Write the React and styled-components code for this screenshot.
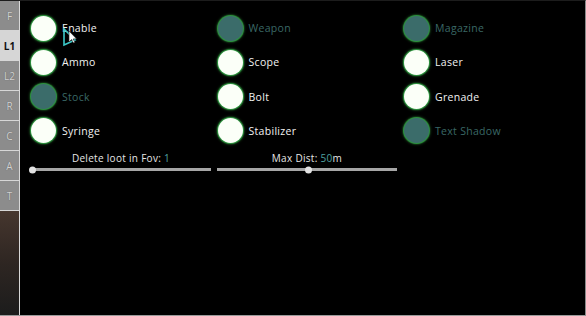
import React from 'react';
import styled, { createGlobalStyle } from 'styled-components';

const GlobalStyle = createGlobalStyle`
  html, body {
    margin: 0;
    padding: 0;
    background: #000;
    overflow: hidden;
  }
`;

const tabs = ['F', 'L1', 'L2', 'R', 'C', 'A', 'T'];

const toggles = [
  [{ label: 'Enable', on: true }, { label: 'Weapon', on: false }, { label: 'Magazine', on: false }],
  [{ label: 'Ammo', on: true }, { label: 'Scope', on: true }, { label: 'Laser', on: true }],
  [{ label: 'Stock', on: false }, { label: 'Bolt', on: true }, { label: 'Grenade', on: true }],
  [{ label: 'Syringe', on: true }, { label: 'Stabilizer', on: true }, { label: 'Text Shadow', on: false }],
];

const sliders = [
  { label: 'Delete loot in Fov: ', value: '1', unit: '', pos: 0 },
  { label: 'Max Dist: ', value: '50', unit: 'm', pos: 50 },
];

const App = () => {
  return (
    <>
      <GlobalStyle />
      <Window>
        <Sidebar>
          {tabs.map((t) => (
            <Tab key={t} active={t === 'L1'}>{t}</Tab>
          ))}
          <SideFill />
        </Sidebar>
        <Main>
          <Grid>
            {toggles.flat().map((item) => (
              <Toggle key={item.label}>
                <Dot on={item.on} />
                <Label on={item.on}>{item.label}</Label>
              </Toggle>
            ))}
          </Grid>
          <Sliders>
            {sliders.map((s) => (
              <SliderBox key={s.label}>
                <SliderLabel>
                  {s.label}
                  <Value>{s.value}</Value>
                  {s.unit}
                </SliderLabel>
                <Track>
                  <Knob style={{ left: `${s.pos}%` }} />
                </Track>
              </SliderBox>
            ))}
          </Sliders>
          <Cursor width="18" height="20" viewBox="0 0 18 20">
            <polygon points="1,1 1,17 12,12" fill="none" stroke="#3cc8c8" strokeWidth="1.6" />
            <polygon points="6,3 6,14 8.5,11.5 10.5,15 12,14.3 10,11 13.5,10.8" fill="#fff" stroke="#222" strokeWidth="0.6" />
          </Cursor>
        </Main>
      </Window>
    </>
  );
};

const Window = styled.div`
  display: flex;
  width: 586px;
  height: 316px;
  box-sizing: border-box;
  border-top: 1px solid #1c1c1c;
  border-right: 1px solid #8a8a8a;
  border-bottom: 1px solid #9a9a9a;
  background: #000;
  font-family: "Open Sans", "DejaVu Sans", sans-serif;
`;

const Sidebar = styled.div`
  flex: none;
  display: flex;
  flex-direction: column;
  width: 19px;
  border-right: 1px solid #d8d8d8;
  background: #8c8c8c;
`;

const Tab = styled.div`
  height: 29px;
  border-bottom: 1px solid #d6d6d6;
  display: flex;
  align-items: center;
  justify-content: center;
  font-size: 10px;
  font-weight: ${(p) => (p.active ? 700 : 400)};
  color: ${(p) => (p.active ? '#111' : '#d2d2d2')};
  background: ${(p) => (p.active ? '#d6d6d6' : '#8c8c8c')};
  text-shadow: ${(p) => (p.active ? 'none' : '0 0 1px #555')};
`;

const SideFill = styled.div`
  flex: 1;
  background: linear-gradient(#46362e, #2e2622 50%, #1c1c1c);
`;

const Main = styled.div`
  position: relative;
  flex: 1;
  min-width: 0;
  overflow: hidden;
  padding: 13px 0 0 11px;
`;

const Grid = styled.div`
  display: grid;
  grid-template-columns: repeat(3, 186.5px);
  grid-auto-rows: 34.3px;
`;

const Toggle = styled.div`
  display: flex;
  align-items: center;
  height: 28px;
  gap: 6px;
`;

const Dot = styled.div`
  width: 25px;
  height: 25px;
  border-radius: 50%;
  background: ${(p) => (p.on ? '#fbfff8' : '#3b6c6a')};
  box-shadow: 0 0 1px 1px #2f9a42, 0 0 3px 1px rgba(60, 170, 70, 0.6);
`;

const Label = styled.span`
  font-size: 10.5px;
  letter-spacing: 0.3px;
  color: ${(p) => (p.on ? '#f2f2f2' : '#3a6866')};
`;

const Sliders = styled.div`
  display: flex;
  gap: 6px;
  margin-left: 0;
`;

const SliderBox = styled.div`
  width: 180px;
  display: flex;
  flex-direction: column;
  align-items: center;
`;

const SliderLabel = styled.div`
  font-size: 10px;
  letter-spacing: 0.3px;
  color: #e6e6e6;
  height: 14px;
  line-height: 14px;
`;

const Value = styled.span`
  color: #4fa3a0;
`;

const Track = styled.div`
  position: relative;
  width: 100%;
  height: 3px;
  margin-top: 3px;
  background: #a6a6a6;
`;

const Knob = styled.div`
  position: absolute;
  top: 50%;
  width: 7px;
  height: 7px;
  border-radius: 50%;
  background: #e2e2e2;
  transform: translate(-2px, -50%);
`;

const Cursor = styled.svg`
  position: absolute;
  left: 43px;
  top: 27px;
`;

export default App;
